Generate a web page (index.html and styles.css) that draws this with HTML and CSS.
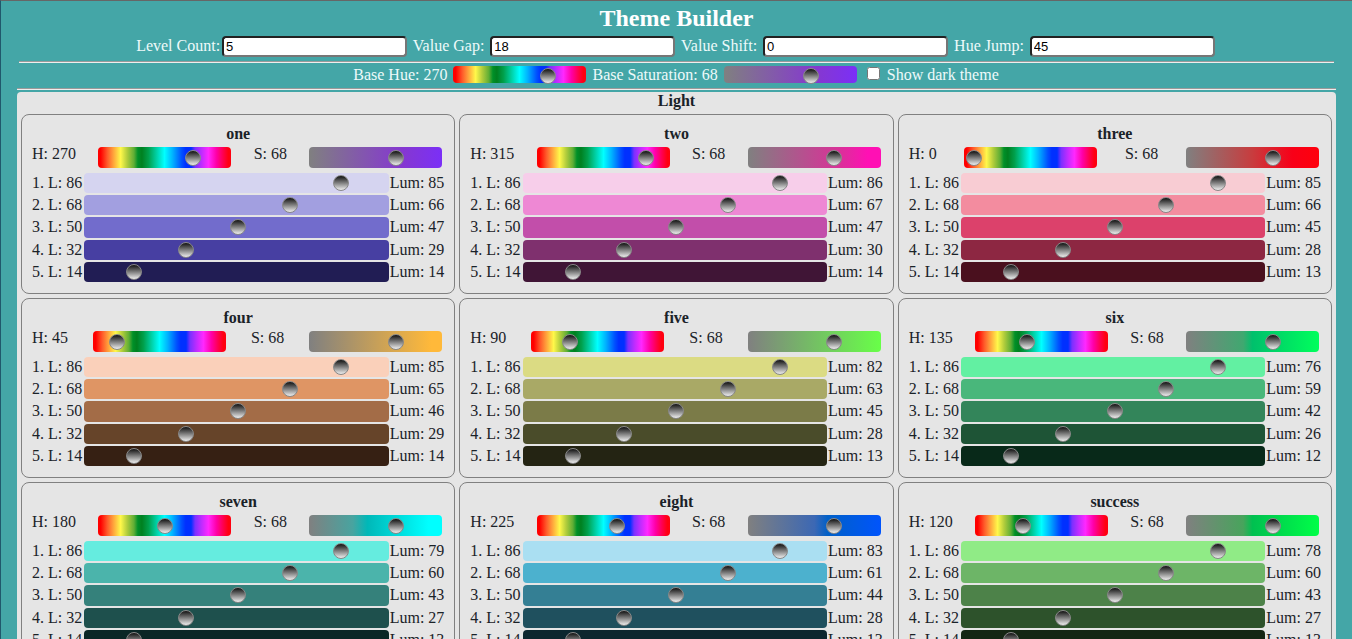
FILE: index.html
```html
<!DOCTYPE html>
<html lang="en">
<head>
<meta charset="utf-8">
<meta name="viewport" content="width=device-width, initial-scale=1">
<title>Theme Builder</title>
<link rel="stylesheet" href="styles.css">
</head>
<body>
<header class="header">
  <h1 class="title">Theme Builder</h1>
  <div class="settings">
    <label>Level Count:<input class="number" type="text" value="5"></label>
    <label>Value Gap: <input class="number" type="text" value="18"></label>
    <label>Value Shift: <input class="number" type="text" value="0"></label>
    <label>Hue Jump: <input class="number" type="text" value="45"></label>
  </div>
  <hr class="rule rule-inset">
  <div class="base">
    <label>Base Hue: 270 <input class="slider hue" type="range" min="0" max="360" value="270"></label>
    <label>Base Saturation: 68 <input class="slider saturation sat-one" type="range" min="0" max="100" value="68"></label>
    <input class="check" type="checkbox" id="dark"><label for="dark"> Show dark theme</label>
  </div>
  <hr class="rule">
</header>
<main class="panel">
  <h2 class="panel-title">Light</h2>
  <div class="cards" id="cards"></div>
</main>
<script src="app.js"></script>
</body>
</html>
```

FILE: styles.css
```css
* {
  box-sizing: border-box;
}

html {
  background: #44a6a7;
}

body {
  margin: 0;
  min-height: 100vh;
  padding: 4px 16px 16px;
  border-top: 1px solid #666;
  border-left: 1px solid #20586c;
  font: 16px/18px "Liberation Serif", "Times New Roman", serif;
  color: #1a2228;
}

.header {
  color: #eefafa;
  text-align: center;
}

.title {
  margin: 0;
  font-size: 24px;
  line-height: 27px;
  color: #fff;
}

.settings {
  padding: 4px 0;
}

.number {
  width: 185px;
  height: 21px;
  margin: 0 2px;
  padding: 1px 2px;
  border: 2px solid;
  border-color: #222 #767676 #767676 #222;
  border-radius: 4px;
  background: #fff;
  color: #000;
  font: 13px "Liberation Sans", Arial, sans-serif;
}

.rule {
  height: 2px;
  margin: 0;
  border: 0;
  border-top: 1px solid #9a9a9a;
  border-bottom: 1px solid #eee;
}

.rule-inset {
  margin: 0 2px;
}

.base {
  padding: 1px 1px 4px 0;
}

.check {
  width: 13px;
  height: 13px;
  margin: 3px 3px 3px 4px;
}

.slider {
  -webkit-appearance: none;
  appearance: none;
  width: 133px;
  height: 21px;
  margin: 0 2px;
  padding: 0 2px;
  border-radius: 4px;
  outline: none;
}

.slider::-webkit-slider-thumb {
  -webkit-appearance: none;
  appearance: none;
  width: 16px;
  height: 16px;
  border: 1px solid #888;
  border-radius: 50%;
  background: linear-gradient(#111, #eee);
}

.base .slider {
  height: 17px;
  padding-top: 2px;
  vertical-align: -3px;
}

.hue {
  background: linear-gradient(to right, #ff0000 2%, #ff5a2a 7%, #ff9a3a 11%, #fff84a 17%, #b0cc3c 22%, #5fae35 27%, #009028 30%, #008020 33%, #00a04c 38%, #00c896 43%, #00ffff 50%, #00b4ff 56%, #0050ff 63%, #0030ff 66%, #0030ff 70%, #7a30ff 73%, #c02cff 78%, #ff28ff 83%, #ff00a8 89%, #ff0050 94%, #ff0010 98%);
}

.sat-one { background: linear-gradient(to right, #808080, #8538d0 70%, #7b2ff7); }
.sat-two { background: linear-gradient(to right, #808080, #d83298 68%, #ff10b4 90%); }
.sat-three { background: linear-gradient(to right, #808080, #c83c3e 50%, #f80018 80%, #ff000c); }
.sat-four { background: linear-gradient(to right, #808080, #ffb93a 92%); }
.sat-five { background: linear-gradient(to right, #808080, #68ff48); }
.sat-six { background: linear-gradient(to right, #808080, #40a870 43%, #00c06c 50%, #00ff5c); }
.sat-seven { background: linear-gradient(to right, #808080, #48a4a0 33%, #00b8b8 44%, #00ffff 90%); }
.sat-eight { background: linear-gradient(to right, #808080, #3c68b4 50%, #0060c8 60%, #0054fc); }
.sat-success { background: linear-gradient(to right, #808080, #48a45c 43%, #00c050 50%, #00ff48); }

.panel {
  margin-top: 2px;
  padding: 0 4px 4px;
  border-radius: 4px;
  background: #e5e5e5;
}

.panel-title {
  margin: 0 0 4px;
  font-size: 16px;
  text-align: center;
}

.cards {
  display: grid;
  grid-template-columns: repeat(3, minmax(0, 1fr));
  gap: 4px;
}

.card {
  padding: 10px 10px 11px;
  border: 1px solid #808080;
  border-radius: 8px;
}

.card-title {
  margin: 0;
  font-size: 16px;
  text-align: center;
}

.tones {
  display: flex;
  justify-content: space-between;
  align-items: flex-start;
  padding: 2px 0 5px;
}

.tones .slider {
  margin-top: 2px;
}

.levels {
  display: grid;
  grid-auto-rows: 1fr;
  gap: 2px;
  min-height: 109px;
}

.level {
  display: flex;
  align-items: center;
}

.level .slider {
  flex: 1;
  min-width: 0;
  height: 100%;
  margin: 0 1px 0 2px;
}
```

FILE: app.js
```js
const lightness = [86, 68, 50, 32, 14];

const themes = [
  { name: "one", hue: 270, lum: [85, 66, 47, 29, 14], colors: ["#d5d4f0", "#a29fe0", "#726ccc", "#473fa2", "#211d54"] },
  { name: "two", hue: 315, lum: [86, 67, 47, 30, 14], colors: ["#f7ceea", "#ee88d4", "#c24eaa", "#7f306e", "#401536"] },
  { name: "three", hue: 0, lum: [85, 66, 45, 28, 13], colors: ["#f8ccd3", "#f38c9f", "#dc416b", "#8d2742", "#4a101e"] },
  { name: "four", hue: 45, lum: [85, 65, 46, 29, 14], colors: ["#fad0ba", "#df9564", "#a36c47", "#664429", "#362013"] },
  { name: "five", hue: 90, lum: [82, 63, 45, 28, 13], colors: ["#dbdb83", "#a9a966", "#7b7b48", "#4a4c2a", "#242413"] },
  { name: "six", hue: 135, lum: [76, 59, 42, 26, 12], colors: ["#62f0a2", "#49b77b", "#33855a", "#1e5436", "#082919"] },
  { name: "seven", hue: 180, lum: [79, 60, 43, 27, 13], colors: ["#65ecdf", "#4bb4ab", "#35817b", "#1e504d", "#0a2726"] },
  { name: "eight", hue: 225, lum: [83, 61, 44, 28, 13], colors: ["#aadff2", "#4cb1ce", "#347f94", "#1f505e", "#0c272f"] },
  { name: "success", hue: 120, lum: [78, 60, 43, 27, 13], colors: ["#90eb86", "#6db567", "#4d8249", "#2d522b", "#142613"] },
];

function levelRow(theme, i) {
  const id = `${theme.name}-l${i + 1}`;
  return `<div class="level">
    <label for="${id}">${i + 1}. L: ${lightness[i]}</label>
    <input class="slider" id="${id}" type="range" min="0" max="99" value="${lightness[i]}" style="background:${theme.colors[i]}">
    <span>Lum: ${theme.lum[i]}</span>
  </div>`;
}

function card(theme) {
  const { name, hue } = theme;
  return `<section class="card">
    <h3 class="card-title">${name}</h3>
    <div class="tones">
      <label for="${name}-hue">H: ${hue}</label>
      <input class="slider hue" id="${name}-hue" type="range" min="0" max="360" value="${hue}">
      <label for="${name}-sat">S: 68</label>
      <input class="slider sat-${name}" id="${name}-sat" type="range" min="0" max="100" value="68">
    </div>
    <div class="levels">${lightness.map((_, i) => levelRow(theme, i)).join("")}</div>
  </section>`;
}

document.getElementById("cards").innerHTML = themes.map(card).join("");
```
